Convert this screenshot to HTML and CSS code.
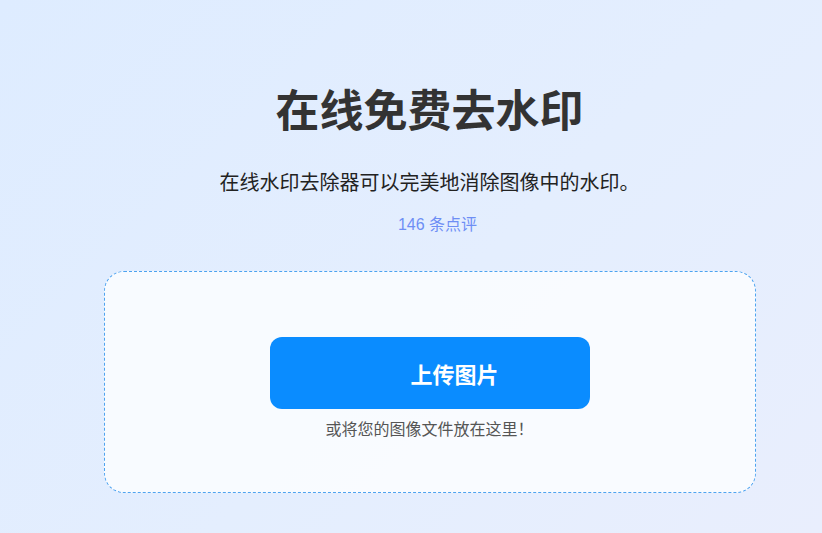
FILE: index.html
```html
<!DOCTYPE html>
<html lang="zh-CN">
<head>
<meta charset="utf-8">
<title>在线免费去水印</title>
<link rel="stylesheet" href="styles.css">
</head>
<body>
<main class="page">
  <h1 class="title">在线免费去水印</h1>
  <p class="subtitle">在线水印去除器可以完美地消除图像中的水印。</p>
  <p class="reviews">146 条点评</p>
  <section class="drop">
    <button class="upload" type="button">上传图片</button>
    <p class="hint">或将您的图像文件放在这里！</p>
  </section>
</main>
</body>
</html>
```

FILE: styles.css
```css
html, body {
  margin: 0;
  padding: 0;
  height: 100%;
}
body {
  background: linear-gradient(135deg, #deecff 0%, #e4eefe 55%, #e9eefd 100%);
  font-family: "Liberation Sans", "Noto Sans CJK SC", sans-serif;
  color: #333;
  overflow: hidden;
}
.page {
  display: flex;
  flex-direction: column;
  align-items: center;
  padding: 82px 0 0 37px;
}
.title {
  margin: 0;
  font-size: 44px;
  line-height: 60px;
  font-weight: 700;
  color: #333;
}
.subtitle {
  margin: 27px 0 0;
  font-size: 20px;
  line-height: 28px;
  color: #222;
}
.reviews {
  margin: 18px 0 0;
  padding-left: 16px;
  font-size: 16px;
  line-height: 20px;
  color: #6e8ef5;
}
.drop {
  margin-top: 36px;
  width: 652px;
  height: 222px;
  box-sizing: border-box;
  border: 1px dashed #4da3f0;
  border-radius: 20px;
  background: rgba(255, 255, 255, 0.75);
  display: flex;
  flex-direction: column;
  align-items: center;
  padding-top: 65px;
}
.upload {
  width: 320px;
  height: 72px;
  border: none;
  border-radius: 12px;
  background: #0a8cff;
  color: #fff;
  font-family: inherit;
  font-size: 22px;
  font-weight: 700;
  padding: 0 0 0 50px;
  cursor: pointer;
}
.hint {
  margin: 11px 0 0;
  font-size: 16px;
  line-height: 20px;
  color: #555;
}
```
